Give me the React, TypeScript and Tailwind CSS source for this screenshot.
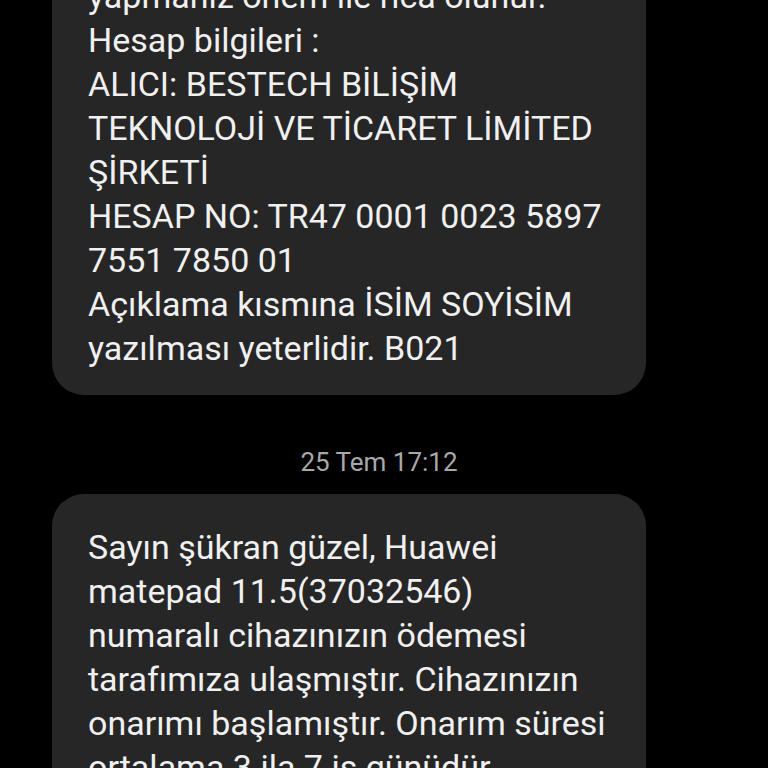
const firstLines = [
  'yapmanız önem ile rica olunur.',
  'Hesap bilgileri :',
  'ALICI: BESTECH BİLİŞİM',
  'TEKNOLOJİ VE TİCARET LİMİTED',
  'ŞİRKETİ',
  'HESAP NO: TR47 0001 0023 5897',
  '7551 7850 01',
  'Açıklama kısmına İSİM SOYİSİM',
  'yazılması yeterlidir. B021',
];

const secondLines = [
  'Sayın şükran güzel, Huawei',
  'matepad 11.5(37032546)',
  'numaralı cihazınızın ödemesi',
  'tarafımıza ulaşmıştır. Cihazınızın',
  'onarımı başlamıştır. Onarım süresi',
  'ortalama 3 ila 7 iş günüdür.',
];

function Bubble({ lines, className = '' }: { lines: string[]; className?: string }) {
  return (
    <div className={`ml-[52px] w-[594px] rounded-[32px] bg-[#262626] pl-[36px] pr-[16px] ${className}`}>
      {lines.map((line, i) => (
        <div key={i} className="whitespace-nowrap text-[34px] leading-[44px] text-[#f0f0f0]">
          {line}
        </div>
      ))}
    </div>
  );
}

export default function App() {
  return (
    <div
      className="h-[768px] w-[768px] overflow-hidden bg-black"
      style={{ fontFamily: 'Roboto, "Noto Sans", sans-serif' }}
    >
      <Bubble lines={firstLines} className="mt-[-57px] pt-[31px] pb-[25px]" />

      {/* date separator */}
      <div className="pt-[52px] pb-[17px] pr-[10px] text-center text-[26px] leading-[30px] text-[#a8a8a8]">
        25 Tem 17:12
      </div>

      <Bubble lines={secondLines} className="pt-[31px] pb-[30px]" />
    </div>
  );
}
